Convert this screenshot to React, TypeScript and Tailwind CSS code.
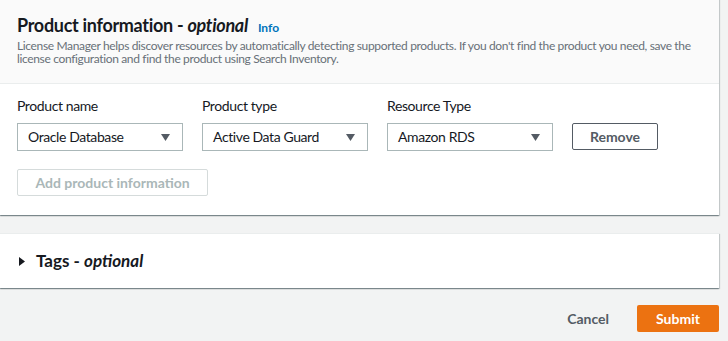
import { ReactNode } from "react";

const font = { fontFamily: 'Lato, "Open Sans", Arial, sans-serif' };

function Caret() {
  return (
    <svg className="w-[9px] h-[7px]" viewBox="0 0 9 7">
      <path d="M0 0h9L4.5 7z" fill="#545b64" />
    </svg>
  );
}

function SelectBox({ label, value }: { label: string; value: string }) {
  return (
    <div className="flex flex-col w-[166px]">
      <span className="text-[14px] leading-[16px] tracking-[-0.4px] text-[#16191f] mb-[9px]">{label}</span>
      <div className="h-[28px] border border-[#aab7b8] bg-white flex items-center justify-between pl-[10px] pr-[12px]">
        <span className="text-[14px] leading-[16px] tracking-[-0.4px] text-[#16191f]">{value}</span>
        <Caret />
      </div>
    </div>
  );
}

function Card({ children, className = "" }: { children: ReactNode; className?: string }) {
  return (
    <div
      className={
        "mr-[9px] bg-white border-t border-[#eaeded] shadow-[0_1px_1px_0_rgba(0,28,36,0.3),1px_1px_1px_0_rgba(0,28,36,0.15),-1px_1px_1px_0_rgba(0,28,36,0.15)] " +
        className
      }
    >
      {children}
    </div>
  );
}

export default function App() {
  return (
    <div className="w-[728px] h-[341px] overflow-hidden bg-[#f2f3f3]" style={font}>
      <Card className="-mt-px">
        <div className="h-[84px] bg-[#fafafa] border-b border-[#eaeded] px-[17px] pt-[14px]">
          <div className="flex items-baseline">
            <h2 className="text-[18px] leading-[22px] tracking-[-0.3px] font-bold text-[#16191f]">
              Product information - <i>optional</i>
            </h2>
            <a className="ml-[10px] text-[12px] font-bold text-[#0073bb]">Info</a>
          </div>
          <p className="mt-[2px] text-[12px] leading-[13px] tracking-[-0.35px] text-[#687078]">
            License Manager helps discover resources by automatically detecting supported products. If you don't find the product you need, save the license configuration and find the product using Search Inventory.
          </p>
        </div>
        <div className="px-[17px] pt-[14px] pb-[19px]">
          <div className="flex items-end gap-[19px]">
            <SelectBox label="Product name" value="Oracle Database" />
            <SelectBox label="Product type" value="Active Data Guard" />
            <SelectBox label="Resource Type" value="Amazon RDS" />
            <button className="h-[27px] w-[86px] mb-px border border-[#545b64] rounded-[2px] bg-white text-[14px] font-bold text-[#545b64]">
              Remove
            </button>
          </div>
          <button className="mt-[18px] h-[27px] w-[191px] border border-[#d5dbdb] rounded-[2px] bg-white text-[14px] font-bold text-[#aab7b8]">
            Add product information
          </button>
        </div>
      </Card>
      <Card className="mt-[18px]">
        <div className="h-[54px] flex items-center px-[19px] gap-[11px]">
          <svg className="w-[6px] h-[9px]" viewBox="0 0 6 9">
            <path d="M0 0l6 4.5L0 9z" fill="#16191f" />
          </svg>
          <span className="text-[17px] font-bold text-[#16191f]">
            Tags - <i>optional</i>
          </span>
        </div>
      </Card>
      <div className="flex justify-end items-center mr-[9px] mt-[17px] gap-[28px]">
        <button className="text-[14px] font-bold text-[#545b64]">Cancel</button>
        <button className="h-[27px] w-[82px] rounded-[2px] bg-[#ec7211] text-[14px] font-bold text-white">
          Submit
        </button>
      </div>
    </div>
  );
}
